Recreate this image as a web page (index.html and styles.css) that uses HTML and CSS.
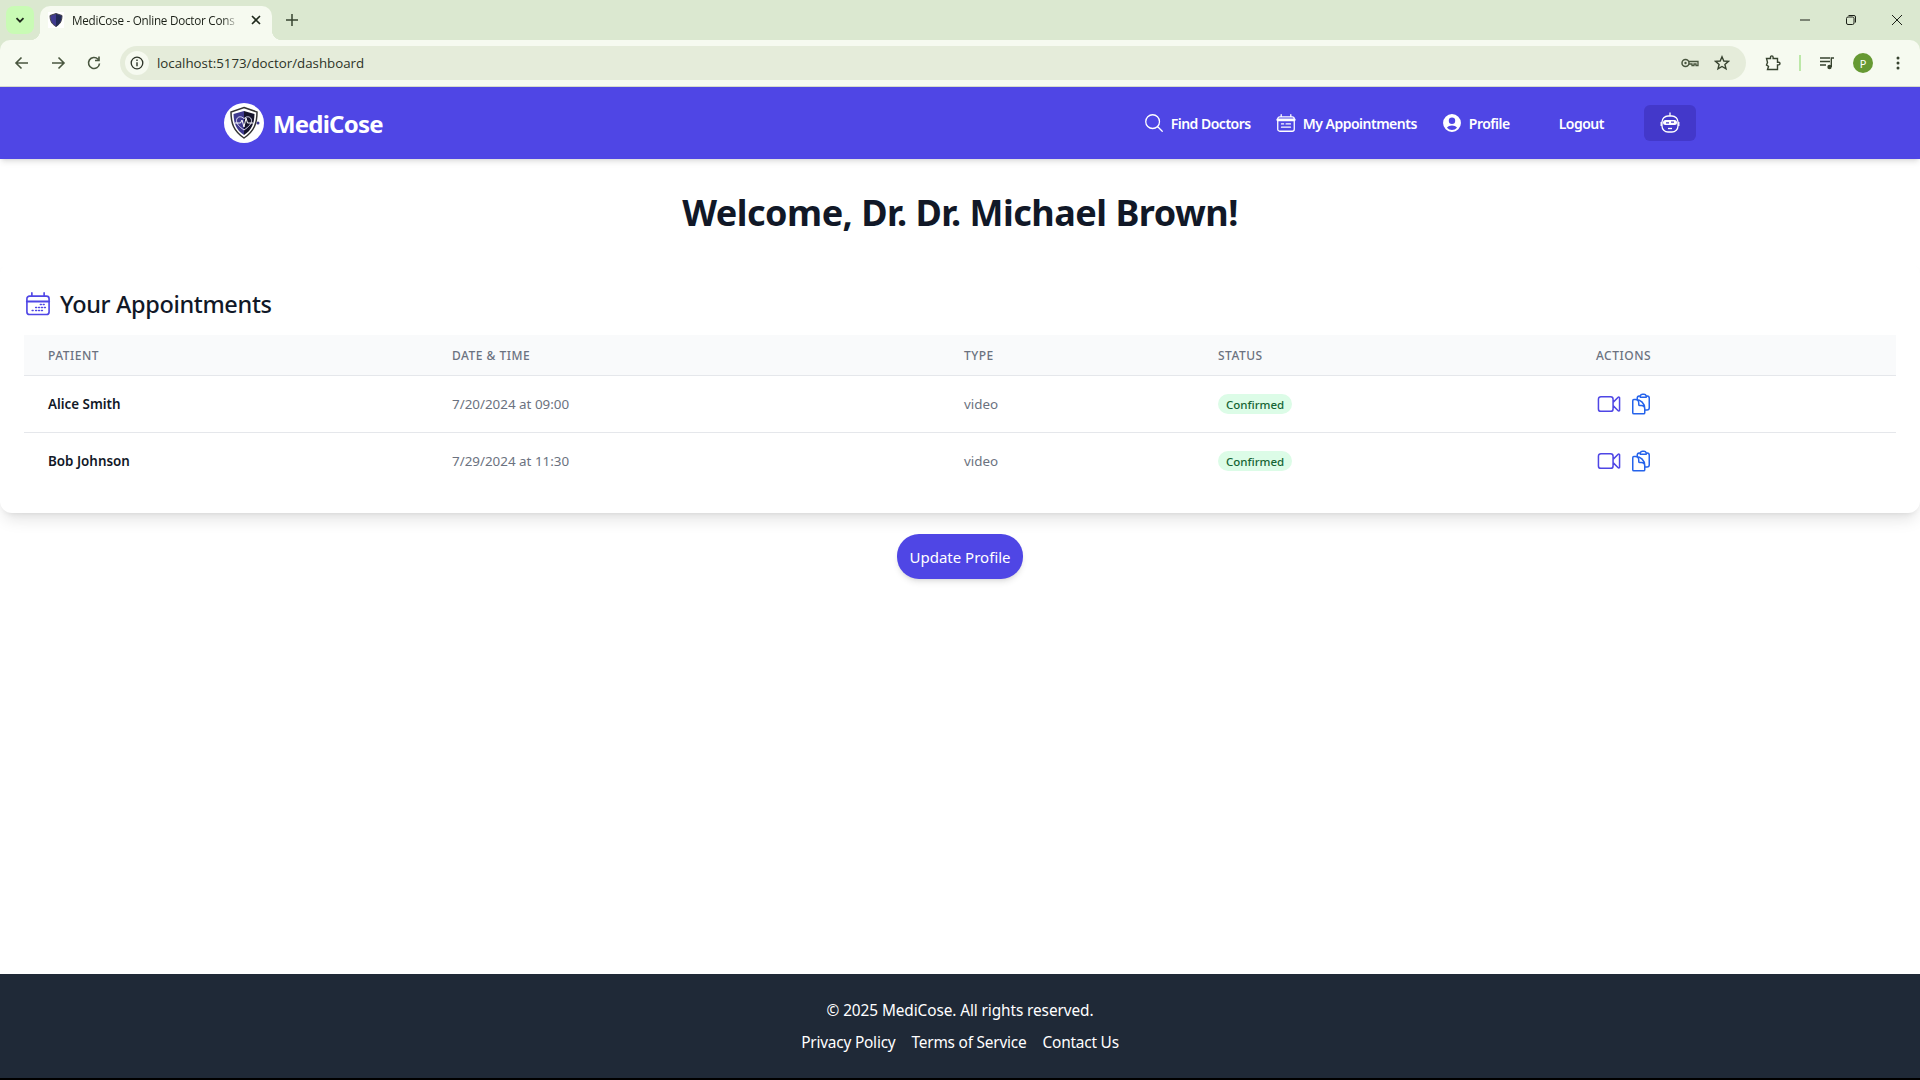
FILE: index.html
```html
<!DOCTYPE html>
<html lang="en">
<head>
    <meta charset="UTF-8">
    <meta name="viewport" content="width=device-width, initial-scale=1.0">
    <title>MediCose - Online Doctor Consultation</title>
    <link rel="stylesheet" href="styles.css">
</head>
<body>
    <div class="browser">
        <div class="tab-strip">
            <button class="tab-search">
                <svg width="12" height="12" viewBox="0 0 12 12"><path d="M2.5 4.2 6 7.7l3.5-3.5" fill="none" stroke="#1f2a1c" stroke-width="1.8"/></svg>
            </button>
            <div class="tab">
                <svg class="tab-favicon" width="16" height="16" viewBox="0 0 16 16">
                    <rect width="16" height="16" fill="#fff"/>
                    <path d="M8 1.5 14 3.5c0 5-1.5 8.500-6 11-4.500-2.500-6-6-6-11z" fill="#3f3a8f" stroke="#444" stroke-width="1"/>
                    <path d="M8 2v12.500c3.500-2 5-5 5.500-10.500z" fill="#222a55"/>
                </svg>
                <span class="tab-title">MediCose - Online Doctor Cons</span>
                <svg class="tab-close" width="12" height="12" viewBox="0 0 12 12"><path d="M2 2l8 8M10 2l-8 8" stroke="#1f2a1c" stroke-width="1.600"/></svg>
            </div>
            <svg class="tab-new" width="14" height="14" viewBox="0 0 14 14"><path d="M7 1v12M1 7h12" stroke="#37432f" stroke-width="1.500"/></svg>
            <div class="window-controls">
                <svg width="12" height="12" viewBox="0 0 12 12"><path d="M1 6h10" stroke="#1c2118" stroke-width="1"/></svg>
                <svg width="12" height="12" viewBox="0 0 12 12"><rect x="1.500" y="3" width="7.500" height="7.500" rx="1.500" fill="none" stroke="#1c2118"/><path d="M3.500 1.500H9a1.500 1.500 0 0 1 1.500 1.500v5.500" fill="none" stroke="#1c2118"/></svg>
                <svg width="12" height="12" viewBox="0 0 12 12"><path d="M1 1l10 10M11 1 1 11" stroke="#1c2118" stroke-width="1"/></svg>
            </div>
        </div>
        <div class="toolbar">
            <div class="toolbar-nav">
                <svg width="16" height="16" viewBox="0 0 16 16"><path d="M14 8H2.500M7.500 2.500 2 8l5.500 5.500" fill="none" stroke="#49563f" stroke-width="1.600"/></svg>
                <svg width="16" height="16" viewBox="0 0 16 16"><path d="M2 8h11.500M8.500 2.500 14 8l-5.500 5.500" fill="none" stroke="#49563f" stroke-width="1.600"/></svg>
                <svg width="16" height="16" viewBox="0 0 16 16"><path d="M13.500 8.500A5.500 5.500 0 1 1 12 4.200M13 1.500v4H9" fill="none" stroke="#49563f" stroke-width="1.600"/></svg>
            </div>
            <div class="omnibox">
                <span class="site-info">
                    <svg width="14" height="14" viewBox="0 0 14 14"><circle cx="7" cy="7" r="5.800" fill="none" stroke="#2c3327" stroke-width="1.300"/><path d="M7 6.200v4M7 3.500v1.400" stroke="#2c3327" stroke-width="1.400"/></svg>
                </span>
                <span class="url">localhost:5173/doctor/dashboard</span>
                <svg class="omni-key" width="18" height="12" viewBox="0 0 18 12"><circle cx="4.500" cy="6" r="3.500" fill="none" stroke="#49563f" stroke-width="1.500"/><circle cx="4.500" cy="6" r="1.200" fill="#49563f"/><path d="M8 4.500h9v4h-2v-1.500h-2v1.500h-2V7H8" fill="none" stroke="#49563f" stroke-width="1.300"/></svg>
                <svg class="omni-star" width="16" height="16" viewBox="0 0 16 16"><path d="M8 1.800 9.800 6l4.600.4-3.500 3 1.100 4.500L8 11.500l-4 2.400 1.100-4.500-3.500-3L6.200 6z" fill="none" stroke="#37432f" stroke-width="1.400"/></svg>
            </div>
            <div class="toolbar-right">
                <svg width="16" height="16" viewBox="0 0 16 16"><path d="M1.500 3.500H5.500V2.200a1.300 1.300 0 0 1 2.600 0v1.300h4.400v3.800h1.200a1.300 1.300 0 0 1 0 2.600h-1.200v4.600H2.500l1-3.100-2-1.500 1-2.500z" fill="none" stroke="#37432f" stroke-width="1.400"/></svg>
                <span class="toolbar-sep"></span>
                <svg width="16" height="14" viewBox="0 0 16 14"><path d="M1 2h10M1 5.500h10M1 9h6" stroke="#37432f" stroke-width="1.300"/><circle cx="10.500" cy="11" r="2.200" fill="#37432f"/><path d="M12.300 11V2H15" fill="none" stroke="#37432f" stroke-width="1.400"/></svg>
                <span class="avatar">P</span>
                <svg width="4" height="14" viewBox="0 0 4 14"><circle cx="2" cy="2" r="1.500" fill="#37432f"/><circle cx="2" cy="7" r="1.500" fill="#37432f"/><circle cx="2" cy="12" r="1.500" fill="#37432f"/></svg>
            </div>
        </div>
    </div>

    <div class="page">
        <nav class="navbar">
            <div class="brand">
                <span class="brand-logo">
                    <svg width="40" height="40" viewBox="0 0 40 40">
                        <circle cx="20" cy="20" r="20" fill="#fff"/>
                        <path d="M20 4.500 33 9c0 11-2.500 19-13 26C9.500 28 7 20 7 9z" fill="#fff" stroke="#333" stroke-width="1.500"/>
                        <path d="M20 8 9.500 11C9.800 20 12 27 20 32z" fill="#3f3a8f"/>
                        <path d="M20 8l10.500 3C30.200 20 28 27 20 32z" fill="#14132b"/>
                        <path d="M20 27c-5-3.500-7.500-6-7.500-9.500 0-4 5-5 7.500-1.800 2.500-3.200 7.500-2.200 7.500 1.800 0 3.500-2.500 6-7.500 9.500z" fill="none" stroke="#dcdcf5" stroke-width="1"/>
                        <path d="M11 20h5.500l1.500-3 2 7 2-9 1.500 5H29" fill="none" stroke="#fff" stroke-width="1"/>
                        <circle cx="34" cy="20" r="1.500" fill="#3f3a8f"/>
                    </svg>
                </span>
                <span class="brand-name">MediCose</span>
            </div>
            <div class="nav-links">
                <a class="nav-link">
                    <svg width="22" height="22" viewBox="0 0 24 24" fill="none" stroke="#fff" stroke-width="1.400"><path d="M21 21l-5.200-5.200M10.500 18a7.500 7.500 0 1 0 0-15 7.500 7.500 0 0 0 0 15z" stroke-linecap="round"/></svg>
                    Find Doctors
                </a>
                <a class="nav-link">
                    <svg width="22" height="22" viewBox="0 0 24 24" fill="none" stroke="#fff" stroke-width="1.400" stroke-linecap="round"><path d="M6.750 3v2.250M17.250 3v2.250M3 18.750V7.500a2.250 2.250 0 0 1 2.250-2.250h13.500A2.250 2.250 0 0 1 21 7.500v11.250A2.250 2.250 0 0 1 18.750 21H5.250A2.250 2.250 0 0 1 3 18.750z"/><path d="M3 8.500h18" stroke-width="3"/><path d="M12 13h5M7 16.500h10M7 13h2.500" stroke-width="1.200"/></svg>
                    My Appointments
                </a>
                <a class="nav-link">
                    <svg width="22" height="22" viewBox="0 0 24 24" fill="#fff"><path fill-rule="evenodd" d="M12 2.250a9.750 9.750 0 1 0 0 19.500 9.750 9.750 0 0 0 0-19.500zM8.500 9.500a3.500 3.500 0 1 1 7 0 3.500 3.500 0 0 1-7 0zM12 19.500a7.400 7.400 0 0 1-5.500-2.450C7.700 15.500 9.700 14.750 12 14.750s4.300.75 5.500 2.300A7.400 7.400 0 0 1 12 19.500z"/></svg>
                    Profile
                </a>
                <a class="nav-link nav-logout">Logout</a>
                <button class="chat-button">
                    <svg width="24" height="24" viewBox="0 0 24 24" fill="none" stroke="#fff" stroke-width="1.300"><path d="M12 1.500V5"/><rect x="4" y="5" width="16" height="16" rx="6"/><path d="M3.200 11v4M20.800 11v4"/><rect x="5" y="9" width="14" height="5" rx="2.500" fill="#fff" stroke="none"/><path d="M8 11.800h3M13 11.200h3" stroke="#4338ca" stroke-width="1.200"/><path d="M10 17.500h4"/></svg>
                </button>
            </div>
        </nav>

        <main class="dashboard">
            <h1 class="welcome">Welcome, Dr. Dr. Michael Brown!</h1>
            <section class="card">
                <h2 class="card-title">
                    <svg width="28" height="28" viewBox="0 0 24 24" fill="none" stroke="#4f46e5" stroke-width="1.400" stroke-linecap="round"><path d="M6.750 2.500v2.750M17.250 2.500v2.750M2.500 18.750V7.500a2.250 2.250 0 0 1 2.250-2.250h14.500a2.250 2.250 0 0 1 2.250 2.250v11.250A2.250 2.250 0 0 1 19.250 21H4.750a2.250 2.250 0 0 1-2.250-2.250z"/><path d="M2.500 9.800h19" stroke-width="1.800"/><path d="M14 12.500h.8M16.500 12.500h.8M10 15h.8M12.500 15h.8M15 15h.8M17.500 15h.8M7 17.500h.8M10 17.500h.8M12.500 17.500h.8M15 17.500h.8" stroke-width="1.300"/></svg>
                    Your Appointments
                </h2>
                <table class="appointments">
                    <colgroup>
                        <col class="col-patient">
                        <col class="col-date">
                        <col class="col-type">
                        <col class="col-status">
                        <col>
                    </colgroup>
                    <thead>
                        <tr>
                            <th>Patient</th>
                            <th>Date &amp; Time</th>
                            <th>Type</th>
                            <th>Status</th>
                            <th>Actions</th>
                        </tr>
                    </thead>
                    <tbody>
                        <tr>
                            <td class="patient-name">Alice Smith</td>
                            <td>7/20/2024 at 09:00</td>
                            <td>video</td>
                            <td><span class="status-badge">Confirmed</span></td>
                            <td>
                                <div class="row-actions">
                                    <svg width="26" height="26" viewBox="0 0 24 24" fill="none" stroke="#4f46e5" stroke-width="1.400" stroke-linecap="round" stroke-linejoin="round"><path d="m15.750 10.500 4.720-4.720a.75.75 0 0 1 1.280.53v11.380a.75.75 0 0 1-1.280.53l-4.720-4.720M4.500 18.750h9a2.250 2.250 0 0 0 2.250-2.250v-9a2.250 2.250 0 0 0-2.250-2.250h-9A2.250 2.250 0 0 0 2.250 7.500v9a2.250 2.250 0 0 0 2.250 2.250Z"/></svg>
                                    <svg width="24" height="24" viewBox="0 0 24 24" fill="none" stroke="#2563eb" stroke-width="1.500" stroke-linecap="round" stroke-linejoin="round"><path d="M8.250 7.500V6.108c0-1.135.845-2.098 1.976-2.192.373-.03.748-.057 1.123-.08M15.750 18H18a2.250 2.250 0 0 0 2.250-2.250V6.108c0-1.135-.845-2.098-1.976-2.192a48.424 48.424 0 0 0-1.123-.08M15.750 18.750v-1.875a3.375 3.375 0 0 0-3.375-3.375h-1.500a1.125 1.125 0 0 1-1.125-1.125v-1.500A3.375 3.375 0 0 0 6.375 7.500H5.250m11.900-3.664A2.251 2.251 0 0 0 15 2.250h-1.500a2.251 2.251 0 0 0-2.150 1.586m5.800 0c.065.21.1.433.1.664v.75h-6V4.500c0-.231.035-.454.1-.664M6.750 7.500H4.875c-.621 0-1.125.504-1.125 1.125v12c0 .621.504 1.125 1.125 1.125h9.750c.621 0 1.125-.504 1.125-1.125V16.500a9 9 0 0 0-9-9Z"/></svg>
                                </div>
                            </td>
                        </tr>
                        <tr>
                            <td class="patient-name">Bob Johnson</td>
                            <td>7/29/2024 at 11:30</td>
                            <td>video</td>
                            <td><span class="status-badge">Confirmed</span></td>
                            <td>
                                <div class="row-actions">
                                    <svg width="26" height="26" viewBox="0 0 24 24" fill="none" stroke="#4f46e5" stroke-width="1.400" stroke-linecap="round" stroke-linejoin="round"><path d="m15.750 10.500 4.720-4.720a.75.75 0 0 1 1.280.53v11.380a.75.75 0 0 1-1.280.53l-4.720-4.720M4.500 18.750h9a2.250 2.250 0 0 0 2.250-2.250v-9a2.250 2.250 0 0 0-2.250-2.250h-9A2.250 2.250 0 0 0 2.250 7.500v9a2.250 2.250 0 0 0 2.250 2.250Z"/></svg>
                                    <svg width="24" height="24" viewBox="0 0 24 24" fill="none" stroke="#2563eb" stroke-width="1.500" stroke-linecap="round" stroke-linejoin="round"><path d="M8.250 7.500V6.108c0-1.135.845-2.098 1.976-2.192.373-.03.748-.057 1.123-.08M15.750 18H18a2.250 2.250 0 0 0 2.250-2.250V6.108c0-1.135-.845-2.098-1.976-2.192a48.424 48.424 0 0 0-1.123-.08M15.750 18.750v-1.875a3.375 3.375 0 0 0-3.375-3.375h-1.500a1.125 1.125 0 0 1-1.125-1.125v-1.500A3.375 3.375 0 0 0 6.375 7.500H5.250m11.900-3.664A2.251 2.251 0 0 0 15 2.250h-1.500a2.251 2.251 0 0 0-2.150 1.586m5.800 0c.065.21.1.433.1.664v.75h-6V4.500c0-.231.035-.454.1-.664M6.750 7.500H4.875c-.621 0-1.125.504-1.125 1.125v12c0 .621.504 1.125 1.125 1.125h9.750c.621 0 1.125-.504 1.125-1.125V16.500a9 9 0 0 0-9-9Z"/></svg>
                                </div>
                            </td>
                        </tr>
                    </tbody>
                </table>
            </section>
            <div class="profile-action">
                <button class="update-button">Update Profile</button>
            </div>
        </main>

        <footer class="site-footer">
            <p class="copyright">© 2025 MediCose. All rights reserved.</p>
            <div class="footer-links">
                <a>Privacy Policy</a>
                <a>Terms of Service</a>
                <a>Contact Us</a>
            </div>
        </footer>
    </div>
</body>
</html>
```

FILE: styles.css
```css
* {
    margin: 0;
    padding: 0;
    box-sizing: border-box;
}

html {
    background: #000;
}

body {
    width: 1920px;
    height: 1080px;
    overflow: hidden;
    font-family: "Noto Sans", "Open Sans", sans-serif;
    color: #111827;
}

svg {
    display: block;
    flex-shrink: 0;
}

button {
    border: none;
    font-family: inherit;
}

/* browser window */
.browser {
    background: #dbe8d0;
}

.tab-strip {
    display: flex;
    align-items: flex-start;
    height: 40px;
    padding: 6px 0 0 6px;
}

.tab-search {
    width: 28px;
    height: 28px;
    display: flex;
    align-items: center;
    justify-content: center;
    background: #c9fbb5;
    border-radius: 8px;
}

.tab {
    position: relative;
    display: flex;
    align-items: center;
    width: 232px;
    height: 34px;
    margin-left: 6px;
    padding: 0 10px 6px 8px;
    background: #f6faf0;
    border-radius: 10px 10px 0 0;
}

.tab::before,
.tab::after {
    content: "";
    position: absolute;
    bottom: 0;
    width: 10px;
    height: 10px;
}

.tab::before {
    left: -10px;
    background: radial-gradient(circle at 0 0, transparent 10px, #f6faf0 10.500px);
}

.tab::after {
    right: -10px;
    background: radial-gradient(circle at 100% 0, transparent 10px, #f6faf0 10.500px);
}

.tab-title {
    flex: 1;
    margin-left: 8px;
    overflow: hidden;
    white-space: nowrap;
    font-family: "Open Sans", sans-serif;
    font-size: 11.7px;
    letter-spacing: -0.25px;
    color: #1c2118;
    -webkit-mask-image: linear-gradient(90deg, #000 150px, transparent 168px);
    mask-image: linear-gradient(90deg, #000 150px, transparent 168px);
}

.tab-close {
    margin-left: 10px;
}

.tab-new {
    margin: 7px 0 0 13px;
}

.window-controls {
    display: flex;
    gap: 34px;
    margin-left: auto;
    padding: 8px 17px 0 0;
}

.toolbar {
    display: flex;
    align-items: center;
    height: 47px;
    padding: 0 14px;
    gap: 18px;
    background: #f6faf0;
    border-bottom: 1px solid #d6dacd;
    border-radius: 10px 10px 0 0;
}

.toolbar-nav {
    display: flex;
    align-items: center;
    gap: 20px;
}

.omnibox {
    display: flex;
    align-items: center;
    width: 1626px;
    height: 34px;
    padding: 0 16px 0 5px;
    background: #e5ecda;
    border-radius: 17px;
}

.site-info {
    width: 24px;
    height: 24px;
    display: flex;
    align-items: center;
    justify-content: center;
    background: #f6faf0;
    border-radius: 12px;
}

.url {
    margin-left: 8px;
    font-family: "Open Sans", sans-serif;
    font-size: 13.3px;
    color: #2c3327;
}

.omni-key {
    margin-left: auto;
}

.omni-star {
    margin-left: 15px;
}

.toolbar-right {
    display: flex;
    align-items: center;
    gap: 18px;
    margin-left: 1px;
}

.toolbar-sep {
    width: 2px;
    height: 16px;
    background: #bce8a8;
}

.avatar {
    width: 20px;
    height: 20px;
    display: flex;
    align-items: center;
    justify-content: center;
    margin-right: 5px;
    font-size: 11px;
    color: #fff;
    background: #669933;
    border-radius: 50%;
}

/* page */
.page {
    display: flex;
    flex-direction: column;
    height: 991px;
    background: #fff;
}

.navbar {
    display: flex;
    align-items: center;
    justify-content: space-between;
    height: 72px;
    padding: 0 224px;
    background: #4f46e5;
    box-shadow: 0 4px 6px -1px rgba(0, 0, 0, 0.1), 0 2px 4px -2px rgba(0, 0, 0, 0.1);
}

.brand {
    display: flex;
    align-items: center;
    gap: 9px;
}

.brand-name {
    font-size: 24px;
    font-weight: 700;
    color: #fff;
    letter-spacing: -0.8px;
}

.nav-links {
    display: flex;
    align-items: center;
    gap: 24px;
}

.nav-link {
    display: flex;
    align-items: center;
    gap: 6px;
    font-size: 14px;
    font-weight: 600;
    color: #fff;
    letter-spacing: -0.5px;
}

.nav-logout {
    margin-left: 25px;
    margin-right: 16px;
}

.chat-button {
    width: 52px;
    height: 36px;
    display: flex;
    align-items: center;
    justify-content: center;
    background: #4338ca;
    border-radius: 6px;
}

.dashboard {
    flex: 1;
    padding-top: 34px;
}

.welcome {
    margin-bottom: 30px;
    font-size: 36px;
    line-height: 40px;
    font-weight: 700;
    text-align: center;
    letter-spacing: -0.5px;
}

.card {
    padding: 25px 24px 24px;
    background: #fff;
    border-radius: 12px;
    box-shadow: 0 10px 15px -3px rgba(0, 0, 0, 0.1), 0 4px 6px -4px rgba(0, 0, 0, 0.1);
}

.card-title {
    display: flex;
    align-items: center;
    gap: 8px;
    margin-bottom: 15px;
    font-size: 23.5px;
    line-height: 32px;
    font-weight: 500;
    letter-spacing: -0.35px;
}

.appointments {
    width: 100%;
    table-layout: fixed;
    border-collapse: collapse;
}

.col-patient {
    width: 404px;
}

.col-date {
    width: 512px;
}

.col-type {
    width: 254px;
}

.col-status {
    width: 378px;
}

.appointments th {
    height: 40px;
    padding: 2px 24px 0;
    font-size: 12px;
    font-weight: 500;
    text-align: left;
    text-transform: uppercase;
    letter-spacing: 0.5px;
    color: #6b7280;
    background: #f9fafb;
    border-bottom: 1px solid #e5e7eb;
}

.appointments td {
    height: 57px;
    padding: 0 24px;
    font-size: 13.4px;
    color: #6b7280;
    border-bottom: 1px solid #e5e7eb;
}

.appointments tbody tr:last-child td {
    border-bottom: none;
}

.appointments .patient-name {
    font-weight: 600;
    color: #111827;
}

.status-badge {
    display: inline-block;
    padding: 1px 8px 0;
    font-size: 11.5px;
    line-height: 19px;
    font-weight: 500;
    color: #166534;
    background: #dcfce7;
    border-radius: 10px;
}

.row-actions {
    display: flex;
    align-items: center;
    gap: 7px;
}

.profile-action {
    display: flex;
    justify-content: center;
    margin-top: 21px;
}

.update-button {
    width: 126px;
    height: 45px;
    font-size: 15px;
    font-weight: 400;
    color: #fff;
    background: #4f46e5;
    border-radius: 22px;
    box-shadow: 0 4px 6px -1px rgba(0, 0, 0, 0.1), 0 2px 4px -2px rgba(0, 0, 0, 0.1);
}

.site-footer {
    height: 104px;
    padding-top: 25px;
    font-size: 15.4px;
    letter-spacing: -0.1px;
    line-height: 24px;
    text-align: center;
    color: #fff;
    background: #1f2937;
}

.copyright {
    margin-bottom: 8px;
}

.footer-links {
    display: flex;
    justify-content: center;
    gap: 16px;
    letter-spacing: -0.2px;
}
```
